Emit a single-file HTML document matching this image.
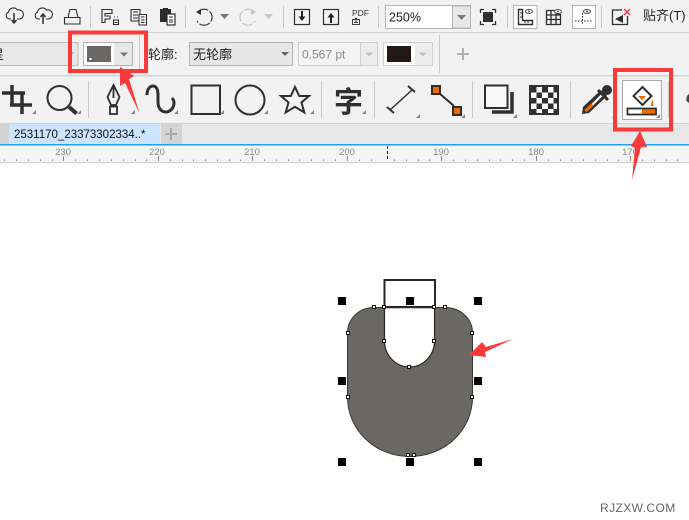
<!DOCTYPE html>
<html><head><meta charset="utf-8"><style>
html,body{margin:0;padding:0;background:#fff}
svg{display:block}
text{font-family:"Liberation Sans","Noto Sans CJK SC",sans-serif}
</style></head><body>
<svg width="689" height="520" viewBox="0 0 689 520" xmlns="http://www.w3.org/2000/svg">
<rect width="689" height="520" fill="#fff"/>
<rect width="689" height="124" fill="#f2f2f2"/>
<rect y="32" width="689" height="1" fill="#d4d4d4"/>
<rect y="75" width="689" height="1.5" fill="#d4d4d4"/>
<rect y="123" width="689" height="1" fill="#d4d4d4"/>
<g fill="#c9c9c9">
<rect x="90" y="6" width="1" height="22"/><rect x="185" y="6" width="1" height="22"/><rect x="283" y="6" width="1" height="22"/><rect x="378" y="6" width="1" height="22"/><rect x="507" y="6" width="1" height="22"/><rect x="601" y="6" width="1" height="22"/>
<rect x="139" y="35" width="1" height="38"/><rect x="439" y="35" width="1" height="38"/>
<rect x="88" y="81" width="1" height="37"/><rect x="321" y="81" width="1" height="37"/><rect x="374" y="81" width="1" height="37"/><rect x="472" y="81" width="1" height="37"/><rect x="570" y="81" width="1" height="37"/><rect x="668" y="81" width="1" height="37"/>
</g>
<!-- row1 icons -->
<g fill="none" stroke="#2e2e2e" stroke-width="1.1">
<path d="M11 19H9.500a3.500 3.500 0 0 1-1-6.800a5 5 0 0 1 9-2.200a4 4 0 0 1 2.500 9H17"/><path d="M14 13v10M11.500 20l2.500 3 2.500-3" stroke-width="1.500"/>
<path d="M40 19h-1.500a3.500 3.500 0 0 1-1-6.800a5 5 0 0 1 9-2.200a4 4 0 0 1 2.500 9H46"/><path d="M43 24v-10M40.500 17l2.500-3 2.500 3" stroke-width="1.500"/>
<path d="M64.500 24V17.500h4V15l1.500-5.500h6l2 8h2v6.500zM68.500 17.500h9.500"/>
<path d="M102 9.500h10v4h-7v2.500h5v3h-5v3.500h-3zM114 17h1M117 17h1M113.500 20h5v4.500h-5zM114.500 22.500h3"/>
<path d="M131 9.500h9v11.500h-9zM133 12h5M133 15h5M133 18h5"/>
<path d="M139 14.500h7.500v10.500h-7.500zM141 17h3.500M141 20h3.500M141 22.500h3.500" fill="#f2f2f2"/>
<path d="M198 12a8 8 0 1 1-1 9" stroke-dasharray="11 1.800"/>
</g>
<path d="M160 9h3v-1h5v1h3v6h-4v7h-7z" fill="#2b2b2b"/>
<path d="M167 14h8v11h-8z" fill="#fff" stroke="#2e2e2e" stroke-width="1.200"/><path d="M169 17h4M169 20h4M169 22h4" stroke="#2e2e2e"/>
<path d="M201 9v6l-5-3z" fill="#2e2e2e"/>
<path d="M220 14h9l-4.500 5z" fill="#777"/>
<g fill="none" stroke="#c4c4c4" stroke-width="1.200"><path d="M254 12a8 8 0 1 0 1 9" stroke-dasharray="11 1.800"/></g>
<path d="M251 9v6l5-3z" fill="#c4c4c4"/>
<path d="M264 14h9l-4.500 5z" fill="#c8c8c8"/>
<rect x="294.500" y="9.500" width="15" height="15" fill="none" stroke="#2e2e2e" stroke-width="1.200"/>
<path d="M302 11v6" stroke="#222" stroke-width="2"/><path d="M298.500 16.500h7l-3.500 4.500z" fill="#222"/>
<rect x="323.500" y="9.500" width="15" height="15" fill="none" stroke="#2e2e2e" stroke-width="1.200"/>
<path d="M331 23v-6" stroke="#222" stroke-width="2"/><path d="M327.500 17.500h7l-3.500-4.500z" fill="#222"/>
<text x="352" y="16" font-size="8.500" fill="#333">PDF</text>
<path d="M352.500 19.500h7v5h-7zM356 17.500v5M354 20l2-2 2 2M354 22.500h4" fill="none" stroke="#444"/>
<rect x="385.500" y="5.500" width="85" height="23" fill="#fff" stroke="#b4b4b4"/>
<rect x="452.500" y="6" width="18" height="22" fill="#e8e8e8" stroke="#b4b4b4"/>
<path d="M457 15h9l-4.500 5z" fill="#777"/>
<text x="389" y="21.500" font-size="12.500" fill="#222">250%</text>
<path d="M480.500 13V9.500H484M492 9.500h3.500V13M495.500 21v3.500H492M484 24.500h-3.500V21" fill="none" stroke="#333" stroke-width="1.300"/>
<rect x="483" y="12" width="10" height="10" fill="#303030"/>
<rect x="513.500" y="5.500" width="23.500" height="23" fill="#fff" stroke="#b4b4b4"/>
<path d="M518.500 9.500v15h14v-4h-10v-11z" fill="none" stroke="#2e2e2e" stroke-width="1.400"/>
<path d="M525 23v-2M528 23v-2M520 13h2M520 17h2" stroke="#2e2e2e"/>
<ellipse cx="529" cy="11.500" rx="3.500" ry="2" fill="none" stroke="#555"/><circle cx="529" cy="11.500" r="1" fill="#555"/>
<path d="M546.500 10.500h10v4h4v10h-14zM551 10.500v14M556 10.500v14M546.500 15h14M546.500 19.500h14" fill="none" stroke="#2e2e2e" stroke-width="1.300"/>
<ellipse cx="558" cy="11.500" rx="3.500" ry="2" fill="#fff" stroke="#555"/><circle cx="558" cy="11.500" r="1" fill="#555"/>
<rect x="572.500" y="5.500" width="23" height="23" fill="#fff" stroke="#b4b4b4"/>
<path d="M575 21h18M582.500 13v12" stroke="#333" stroke-dasharray="1.500 1.500" fill="none"/>
<ellipse cx="587" cy="11.500" rx="3.500" ry="2" fill="none" stroke="#555"/><circle cx="587" cy="11.500" r="1" fill="#555"/>
<path d="M622 10h-9.500v14.500h15V16" fill="none" stroke="#2e2e2e" stroke-width="1.300"/>
<path d="M615 19l8-4v8z" fill="#2b2b2b"/>
<path d="M624 9l6 6M630 9l-6 6" stroke="#e8363a" stroke-width="1.400"/>
<text x="643" y="20" font-size="13" fill="#222">贴齐(T)</text>
<!-- row2 -->
<rect x="-5" y="42.500" width="83" height="23" fill="#e8e8e8" stroke="#bdbdbd"/>
<text x="-9" y="59" font-size="13" fill="#222">星</text>
<path d="M67 52h8l-4 4z" fill="#bbb"/>
<rect x="83.500" y="42.500" width="49" height="23" fill="#e8e8e8" stroke="#b4b4b4"/>
<rect x="84" y="43" width="30" height="22" fill="#fff"/>
<rect x="87" y="46" width="24" height="16" fill="#6a6865"/>
<rect x="89" y="57.500" width="3" height="3" fill="#fff" stroke="#333" stroke-width=".5"/>
<path d="M120 52.500h8l-4 4z" fill="#777"/>
<text x="148" y="59" font-size="13" fill="#222">轮廓:</text>
<rect x="189.500" y="42.500" width="103" height="23" fill="#e6e6e6" stroke="#b4b4b4"/>
<text x="193" y="59" font-size="13" fill="#222">无轮廓</text>
<path d="M281 52h8l-4 4z" fill="#666"/>
<rect x="298.500" y="42.500" width="62" height="23" fill="#f4f4f4" stroke="#d0d0d0"/>
<text x="302" y="58.500" font-size="12" fill="#8a8a8a">0.567 pt</text>
<rect x="360.500" y="42.500" width="17" height="23" fill="#ececec" stroke="#d0d0d0"/>
<path d="M365 52.500h8l-4 4z" fill="#c4c4c4"/>
<rect x="383.500" y="42.500" width="49" height="23" fill="#ececec" stroke="#d0d0d0"/>
<rect x="384" y="43" width="31" height="22" fill="#fff"/>
<rect x="387" y="46" width="24" height="16" fill="#231815"/>
<path d="M419 52.500h8l-4 4z" fill="#c4c4c4"/>
<path d="M457 54h12M463 48v12" stroke="#b0b0b0" stroke-width="2"/>
<!-- row3 -->
<g fill="none" stroke="#2f2f2f">
<path d="M2 93h23M12 85v21M10 105h22M22 93v21" stroke-width="3.500"/>
<circle cx="59.500" cy="98" r="12" stroke-width="2"/><path d="M69 107l7.500 6.500" stroke-width="4"/>
<path d="M113.500 85l-6 12 3.500 8h5l3.500-8zM113.500 85v13M110 106.500h7v7.500h-7z" stroke-width="1.800"/>
<path d="M147 95c0-6 3-9 6-9s5 3 5 9v7c0 7 4 10 8 10s8-4 8-9c0-2-1-4-2-5" stroke-width="3"/>
<rect x="191.500" y="85.500" width="28.500" height="28.500" stroke-width="2"/>
<circle cx="250" cy="100" r="14.500" stroke-width="2"/>
<path d="M295 87l4.200 9h9.800l-7.500 6.500 2.800 10-9.300-5.700-9.300 5.700 2.800-10-7.500-6.500h9.800z" stroke-width="2"/>
<path d="M390 110l22-20" stroke-width="1.500"/><path d="M387 107l7 6M408 86l7 6" stroke-width="2"/>
<path d="M440 94l13 12" stroke-width="0"/>
<path d="M439 93l15 13" stroke-width="2"/>
<rect x="485" y="85.500" width="22.500" height="22.500" stroke-width="2" fill="#f8f8f8"/>
<path d="M492 112h20V92" stroke-width="3.500"/>
</g>
<text x="334" y="112" font-size="29" font-weight="bold" fill="#2f2f2f" font-family="Noto Sans CJK SC">字</text>
<rect x="432" y="86" width="8" height="8" fill="#f06a00" stroke="#2f2f2f" stroke-width="2"/>
<rect x="453" y="107" width="8" height="8" fill="#f06a00" stroke="#2f2f2f" stroke-width="2"/>
<rect x="529" y="85" width="30" height="30" fill="#303030"/>
<g fill="#fff">
<rect x="536.500" y="87" width="5.500" height="5.500"/><rect x="548" y="87" width="5.500" height="5.500"/>
<rect x="531" y="92.500" width="5.500" height="5.500"/><rect x="542" y="92.500" width="6" height="5.500"/><rect x="553.500" y="92.500" width="3.500" height="5.500"/>
<rect x="536.500" y="98" width="5.500" height="5.500"/><rect x="548" y="98" width="5.500" height="5.500"/>
<rect x="531" y="103.500" width="5.500" height="5.500"/><rect x="542" y="103.500" width="6" height="5.500"/><rect x="553.500" y="103.500" width="3.500" height="5.500"/>
<rect x="536.500" y="109" width="5.500" height="4"/><rect x="548" y="109" width="5.500" height="4"/>
</g>
<path d="M582 114l1-7 18-17 6 6-18 17z" fill="#2f2f2f"/>
<path d="M592 105l10-10" stroke="#fff" stroke-width="2.200"/>
<path d="M585.500 111l7-6.500" stroke="#f06a00" stroke-width="3.200"/>
<path d="M598 90l10 10" stroke="#2f2f2f" stroke-width="3"/>
<circle cx="607" cy="90" r="5" fill="#2f2f2f"/>
<rect x="622.500" y="80.500" width="39" height="39" fill="#fff" stroke="#aaa"/>
<path d="M642.500 87l9 9-9 9-9-9z" fill="#fff" stroke="#2f2f2f" stroke-width="2"/>
<path d="M638 96h8l-4 4z" fill="#f06a00"/>
<path d="M652.500 99l1 7h-3z" fill="#f06a00"/>
<rect x="627.500" y="108.500" width="28.500" height="6" fill="#fff" stroke="#2f2f2f" stroke-width="1.800"/>
<rect x="642" y="109.500" width="13" height="4" fill="#f06a00"/>
<path d="M689 94c-2 1-3 4-2.500 7l2.500 2z" fill="#444"/>
<g fill="#888">
<path d="M36 114v-4l-4 4zM81 114v-4l-4 4zM135 114v-4l-4 4zM178 114v-4l-4 4zM224 114v-4l-4 4zM268 114v-4l-4 4zM314 114v-4l-4 4zM366 114v-4l-4 4zM420 118v-4l-4 4zM465 118v-4l-4 4zM517 118v-4l-4 4zM616 118v-4l-4 4zM660 118v-4l-4 4z"/>
</g>
<!-- tabs -->
<rect y="124" width="689" height="20" fill="#e8e8e8"/>
<rect y="124" width="9" height="20" fill="#d2d2d2"/>
<rect x="9" y="124" width="151" height="20" fill="#cce4ff"/>
<rect x="161" y="124" width="21" height="20" fill="#d4d4d4"/>
<path d="M165 134h12M171 128v12" stroke="#aaa" stroke-width="2"/>
<text x="14" y="138" font-size="11.500" fill="#111">2531170_23373302334..*</text>
<rect y="144" width="689" height="1.500" fill="#1ba1f2"/>
<!-- ruler -->
<rect y="145.500" width="689" height="17" fill="#f5f5f5"/>
<rect y="162" width="689" height="1" fill="#cfcfcf"/>
<g font-size="9.500" fill="#888" text-anchor="middle">
<text x="63" y="155">230</text><text x="157" y="155">220</text><text x="252" y="155">210</text><text x="347" y="155">200</text><text x="441" y="155">190</text><text x="536" y="155">180</text><text x="630" y="155">170</text>
</g>
<g stroke="#888" stroke-width="1">
<path d="M63.500 156v5M158.500 156v5M252.500 156v5M347.500 156v5M441.500 156v5M536.500 156v5M630.500 156v5"/>
<path d="M4.500 159.500v1.500M16.500 159.500v1.500M28.500 159.500v1.500M40.500 159.500v1.500M52.500 159.500v1.500M75.500 159.500v1.500M87.500 159.500v1.500M99.500 159.500v1.500M111.500 159.500v1.500M123.500 159.500v1.500M135.500 159.500v1.500M146.500 159.500v1.500M170.500 159.500v1.500M182.500 159.500v1.500M193.500 159.500v1.500M205.500 159.500v1.500M217.500 159.500v1.500M229.500 159.500v1.500M240.500 159.500v1.500M264.500 159.500v1.500M276.500 159.500v1.500M288.500 159.500v1.500M299.500 159.500v1.500M311.500 159.500v1.500M323.500 159.500v1.500M335.500 159.500v1.500M359.500 159.500v1.500M371.500 159.500v1.500M394.500 159.500v1.500M406.500 159.500v1.500M418.500 159.500v1.500M429.500 159.500v1.500M453.500 159.500v1.500M465.500 159.500v1.500M477.500 159.500v1.500M489.500 159.500v1.500M500.500 159.500v1.500M512.500 159.500v1.500M524.500 159.500v1.500M548.500 159.500v1.500M560.500 159.500v1.500M571.500 159.500v1.500M583.500 159.500v1.500M595.500 159.500v1.500M607.500 159.500v1.500M618.500 159.500v1.500M642.500 159.500v1.500M654.500 159.500v1.500M666.500 159.500v1.500M677.500 159.500v1.500"/>
</g>
<path d="M387.500 146v15" stroke="#111" stroke-dasharray="3 2"/>
<!-- shape -->
<rect x="384.500" y="280" width="50.500" height="27" fill="#fff" stroke="#2d2623" stroke-width="2"/>
<path d="M374 307.500H384.500V341A25 26 0 0 0 434.500 341V307.500H445C461 307.500 472.500 319 472.500 333V397C472.500 430 445 456.500 410 456.500C375 456.500 347.500 430 347.500 397V333C347.500 319 359 307.500 374 307.500Z" fill="#6a6865" stroke="#3a3432" stroke-width="1"/>
<path d="M384.500 307.500V341A25 26 0 0 0 434.500 341V307.500" fill="#fff" stroke="#2d2623" stroke-width="1.200"/>
<path d="M384.500 307.500h50" stroke="#2d2623" stroke-width="1.500"/>
<g fill="#000">
<rect x="338" y="297" width="8" height="8"/><rect x="406" y="297" width="8" height="8"/><rect x="474" y="297" width="8" height="8"/>
<rect x="338" y="377" width="8" height="8"/><rect x="474" y="377" width="8" height="8"/>
<rect x="338" y="458" width="8" height="8"/><rect x="406" y="458" width="8" height="8"/><rect x="474" y="458" width="8" height="8"/>
</g>
<g fill="#fff" stroke="#111" stroke-width="1">
<rect x="372.500" y="305.500" width="3" height="3"/><rect x="382.500" y="305.500" width="3" height="3"/><rect x="432.500" y="305.500" width="3" height="3"/><rect x="443.500" y="305.500" width="3" height="3"/>
<rect x="346.500" y="331.500" width="3" height="3"/><rect x="470.500" y="331.500" width="3" height="3"/>
<rect x="382.500" y="339.500" width="3" height="3"/><rect x="432.500" y="339.500" width="3" height="3"/>
<rect x="407.500" y="365.500" width="3" height="3"/>
<rect x="346.500" y="395.500" width="3" height="3"/><rect x="470.500" y="395.500" width="3" height="3"/>
<rect x="406.500" y="453.500" width="3" height="3"/><rect x="412.500" y="453.500" width="3" height="3"/>
</g>
<!-- red annotations -->
<rect x="70" y="32.500" width="76" height="38.500" fill="none" stroke="#f93a3a" stroke-width="4"/>
<rect x="615" y="70" width="56" height="59.500" fill="none" stroke="#f93a3a" stroke-width="4"/>
<path d="M120 67L134 76 129 79 139.500 113 125 83 120 86Z" fill="#f93a3a"/>
<path d="M640 131L647 147 641 147 632 180 635 148 631 146Z" fill="#f93a3a"/>
<path d="M469 355L482 342 486 347 513 339 485 352 486 357Z" fill="#f93a3a"/>
<text x="600" y="512" font-size="12" fill="#666" letter-spacing=".4">RJZXW.COM</text>
</svg>
</body></html>
